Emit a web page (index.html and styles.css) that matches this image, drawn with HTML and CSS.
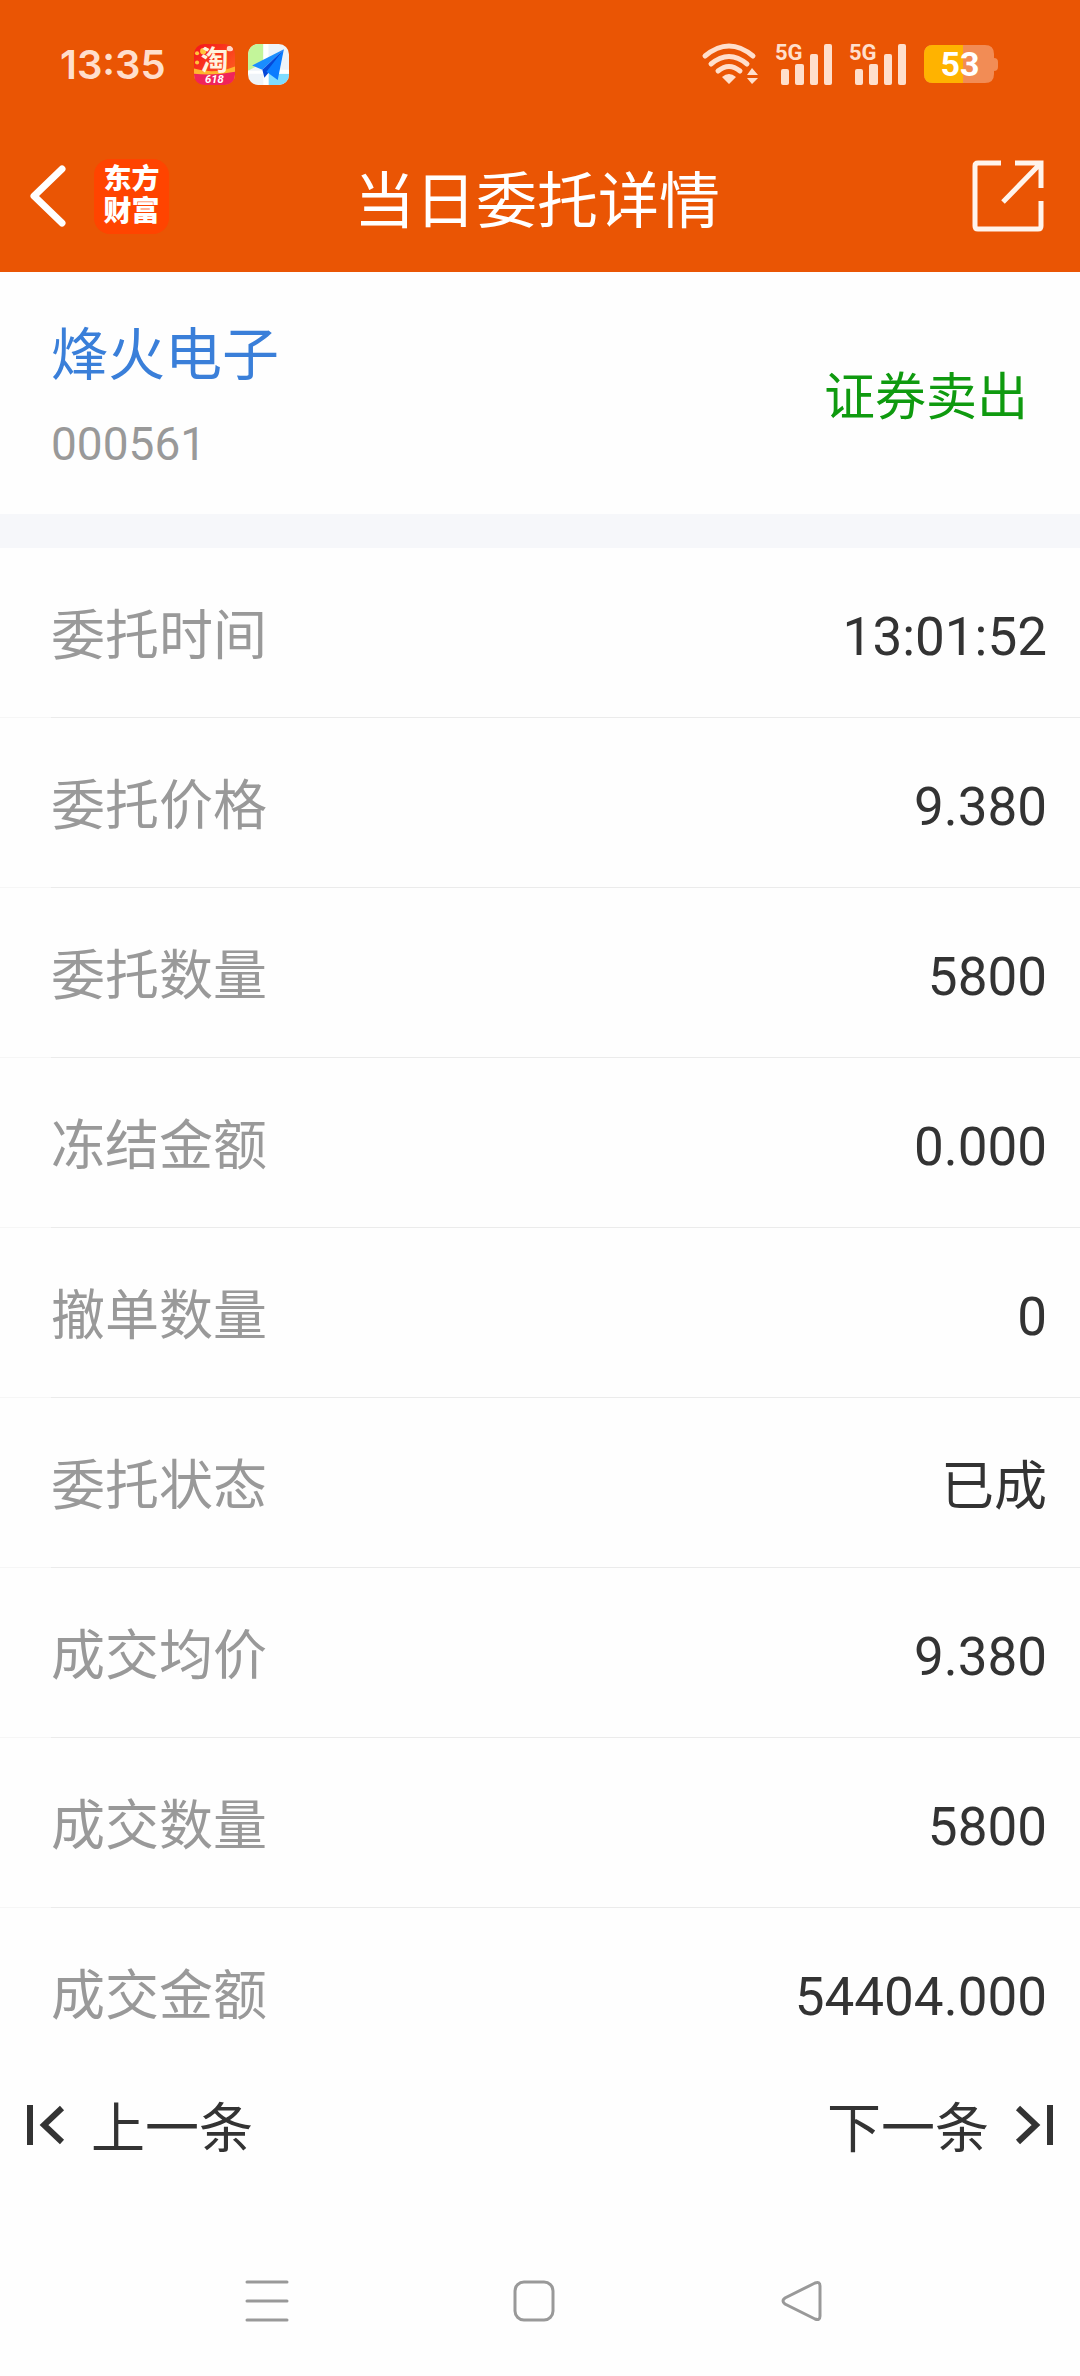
FILE: index.html
```html
<!DOCTYPE html>
<html lang="zh-CN">
<head>
    <meta charset="UTF-8">
    <meta name="viewport" content="width=device-width, initial-scale=1.0">
    <title>当日委托详情</title>
    <link rel="stylesheet" href="styles.css">
</head>
<body>
    <div class="top">
        <div class="status-bar">
            <span class="clock">13:35</span>
            <svg class="app-icon" viewBox="0 0 40 40">
                <defs>
                    <linearGradient id="taoBg" x1="0" y1="0" x2="1" y2="1">
                        <stop offset="0" stop-color="#f5121c"/>
                        <stop offset="1" stop-color="#ff6a1f"/>
                    </linearGradient>
                    <clipPath id="iconClip"><rect width="40" height="40" rx="10"/></clipPath>
                </defs>
                <g clip-path="url(#iconClip)">
                    <rect width="40" height="40" fill="url(#taoBg)"/>
                    <path d="M0 24Q20 30 40 22V34H0Z" fill="#ffb52e"/>
                    <path d="M0 29Q20 31 40 27V40H0Z" fill="#f0245a"/>
                    <circle cx="3" cy="9" r="2" fill="#ffc53a"/>
                    <circle cx="9" cy="7" r="3" fill="#ffc53a"/>
                    <circle cx="3" cy="18" r="2" fill="#ffc53a"/>
                    <rect x="32" y="2" width="6" height="5" rx="2" fill="#ffd9c8"/>
                    <text x="20" y="25" class="tao-text">淘</text>
                    <text x="20" y="38" class="tao-sale">618</text>
                </g>
            </svg>
            <svg class="app-icon" viewBox="0 0 40 40">
                <g clip-path="url(#iconClip)">
                    <rect width="40" height="40" fill="#eef3f8"/>
                    <path d="M0 0H15V18L0 26Z" fill="#c3f59a"/>
                    <path d="M20 29H40V40H20Z" fill="#7fdcff"/>
                    <path d="M15 0H20V40H15ZM0 26H15V29H0ZM20 25H40V29H20Z" fill="#fff"/>
                    <path d="M35 5L4 21L14 25Z" fill="#1a8dff"/>
                    <path d="M35 5L14 25L16 33L20 28Z" fill="#0548d8"/>
                    <path d="M35 5L18 27L29 35Z" fill="#0a7cff"/>
                </g>
            </svg>
            <div class="status-right">
                <svg class="wifi" viewBox="0 0 58 42">
                    <g fill="none" stroke="#ffdfcc" stroke-width="5" stroke-linecap="round">
                        <path d="M4 13Q28 -7 52 13"/>
                        <path d="M10 21Q28 6 46 21"/>
                        <path d="M17 28Q28 19 39 28"/>
                    </g>
                    <path d="M21 34Q28 28 35 34L28 41ZM46 32L51 25L57 32ZM46 35H57L51 41Z" fill="#ffdfcc"/>
                </svg>
                <svg class="signal" viewBox="0 0 58 42">
                    <text x="0" y="17" class="net">5G</text>
                    <g fill="#ffdfcc">
                        <rect x="6" y="26" width="8" height="16" rx="2"/>
                        <rect x="20" y="21" width="9" height="21" rx="2"/>
                        <rect x="35" y="11" width="8" height="31" rx="2"/>
                        <rect x="49" y="1" width="8" height="41" rx="2"/>
                    </g>
                </svg>
                <svg class="signal" viewBox="0 0 58 42">
                    <text x="0" y="17" class="net">5G</text>
                    <g fill="#ffdfcc">
                        <rect x="6" y="26" width="8" height="16" rx="2"/>
                        <rect x="20" y="21" width="9" height="21" rx="2"/>
                        <rect x="35" y="11" width="8" height="31" rx="2"/>
                        <rect x="49" y="1" width="8" height="41" rx="2"/>
                    </g>
                </svg>
                <svg class="battery" viewBox="0 0 75 40">
                    <path d="M10 1H62Q71 1 71 10V14Q75 14 75 18V23Q75 27 71 27V30Q71 39 62 39H10Q1 39 1 30V10Q1 1 10 1Z" fill="#f28c55"/>
                    <path d="M10 1H40V39H10Q1 39 1 30V10Q1 1 10 1Z" fill="#ffb300"/>
                    <text x="37" y="32" class="battery-text">53</text>
                </svg>
            </div>
        </div>
        <header class="title-bar">
            <div class="title-left">
                <button type="button" class="icon-btn" aria-label="返回">
                    <svg width="36" height="62" viewBox="0 0 36 62">
                        <path d="M32 4L4 31L32 58" fill="none" stroke="#fff" stroke-width="7" stroke-linecap="round" stroke-linejoin="round"/>
                    </svg>
                </button>
                <div class="logo"><span>东方</span><span>财富</span></div>
            </div>
            <h1>当日委托详情</h1>
            <button type="button" class="icon-btn share" aria-label="分享">
                <svg width="72" height="72" viewBox="0 0 72 72">
                    <g fill="none" stroke="#fff4ec" stroke-width="5">
                        <path d="M29 3H6Q3 3 3 6V66Q3 69 6 69H66Q69 69 69 66V41"/>
                        <path d="M43 3H69V28M68 4L31 42"/>
                    </g>
                </svg>
            </button>
        </header>
    </div>

    <main>
        <section class="stock">
            <div>
                <a href="#" class="stock-name">烽火电子</a>
                <div class="stock-code">000561</div>
            </div>
            <div class="direction">证券卖出</div>
        </section>

        <dl class="detail">
            <div class="row"><dt>委托时间</dt><dd>13:01:52</dd></div>
            <div class="row"><dt>委托价格</dt><dd>9.380</dd></div>
            <div class="row"><dt>委托数量</dt><dd>5800</dd></div>
            <div class="row"><dt>冻结金额</dt><dd>0.000</dd></div>
            <div class="row"><dt>撤单数量</dt><dd>0</dd></div>
            <div class="row"><dt>委托状态</dt><dd>已成</dd></div>
            <div class="row"><dt>成交均价</dt><dd>9.380</dd></div>
            <div class="row"><dt>成交数量</dt><dd>5800</dd></div>
            <div class="row"><dt>成交金额</dt><dd>54404.000</dd></div>
        </dl>
    </main>

    <div class="pager">
        <button type="button" class="pager-btn">
            <svg width="38" height="40" viewBox="0 0 38 40">
                <path d="M3 0V40M35 3L17 20L35 37" fill="none" stroke="#333" stroke-width="6"/>
            </svg>
            上一条
        </button>
        <button type="button" class="pager-btn">
            下一条
            <svg width="38" height="40" viewBox="0 0 38 40">
                <path d="M35 0V40M3 3L21 20L3 37" fill="none" stroke="#333" stroke-width="6"/>
            </svg>
        </button>
    </div>

    <nav class="system-nav">
        <button type="button" class="icon-btn" aria-label="最近任务">
            <svg width="42" height="42" viewBox="0 0 42 42">
                <path d="M1 2H41M1 21H41M1 40H41" stroke="#999" stroke-width="3" stroke-linecap="round"/>
            </svg>
        </button>
        <button type="button" class="icon-btn" aria-label="主屏幕">
            <svg width="42" height="42" viewBox="0 0 42 42">
                <rect x="2" y="2" width="38" height="38" rx="9" fill="none" stroke="#999" stroke-width="3"/>
            </svg>
        </button>
        <button type="button" class="icon-btn" aria-label="返回上一页">
            <svg width="42" height="42" viewBox="0 0 42 42">
                <path d="M34 3L4 18Q0 21 4 24L34 39Q39 41 39 36V6Q39 1 34 3Z" fill="none" stroke="#999" stroke-width="3"/>
            </svg>
        </button>
    </nav>
</body>
</html>
```

FILE: styles.css
```css
body {
    margin: 0;
    background-color: #fefefe;
    color: #333;
    font-family: Roboto, "Noto Sans CJK SC", sans-serif;
    font-size: 53px;
}
svg {
    display: block;
    flex: none;
    overflow: visible;
}
button {
    padding: 0;
    border: none;
    background: none;
    color: inherit;
    font: inherit;
    cursor: pointer;
}
.top {
    background-color: #ea5504;
    color: #fff;
}
.status-bar {
    display: flex;
    align-items: center;
    height: 112px;
    padding: 8px 82px 0 60px;
}
.clock {
    margin-right: 28px;
    color: #ffdfcc;
    font-family: Inter, sans-serif;
    font-size: 40px;
    font-weight: 600;
}
.app-icon {
    width: 41px;
    height: 41px;
    margin-right: 13px;
}
.tao-text {
    fill: #fff3df;
    font-size: 27px;
    font-weight: bold;
    text-anchor: middle;
}
.tao-sale {
    fill: #fff;
    font-size: 11px;
    font-style: italic;
    font-weight: bold;
    text-anchor: middle;
}
.status-right {
    display: flex;
    align-items: center;
    gap: 16px;
    margin-left: auto;
}
.wifi, .signal {
    width: 58px;
    height: 42px;
}
.net {
    fill: #ffdfcc;
    font-size: 22px;
    font-weight: bold;
}
.battery {
    width: 75px;
    height: 40px;
}
.battery-text {
    fill: #fff;
    font-size: 34px;
    font-weight: bold;
    text-anchor: middle;
}
.title-bar {
    display: grid;
    grid-template-columns: 1fr auto 1fr;
    align-items: center;
    height: 152px;
    padding: 0 36px 0 30px;
}
.title-left {
    display: flex;
    align-items: center;
    gap: 28px;
}
.logo {
    display: flex;
    flex-direction: column;
    justify-content: center;
    width: 75px;
    height: 75px;
    border-radius: 16px;
    background-color: #ff4400;
    font-size: 28px;
    font-weight: 900;
    line-height: 32px;
    text-align: center;
}
.title-bar h1 {
    margin: 0;
    padding-top: 12px;
    font-size: 61px;
    font-weight: normal;
    line-height: 80px;
}
.share {
    justify-self: end;
}
.stock {
    display: flex;
    justify-content: space-between;
    align-items: center;
    padding: 44px 52px 40px 51px;
    border-bottom: 34px solid #f6f7fa;
}
.stock-name {
    display: block;
    margin-bottom: 18px;
    color: #3a7fd9;
    font-size: 57px;
    line-height: 80px;
    text-decoration: none;
}
.stock-code {
    color: #999;
    font-size: 46px;
    line-height: 60px;
}
.direction {
    padding-top: 6px;
    color: #0f9a0f;
    font-size: 51px;
    line-height: 80px;
}
.detail {
    margin: 0;
}
.row {
    display: flex;
    justify-content: space-between;
    align-items: center;
    padding: 49px 33px 41px 51px;
    line-height: 80px;
    /* the divider is fainter under the left inset */
    background: linear-gradient(to right, #f6f6f6 51px, #ebebeb 51px) bottom / 100% 1px no-repeat;
}
.row:last-child {
    background: none;
}
.row dt {
    color: #999;
    font-size: 54px;
}
.row dd {
    margin: 0;
}
.pager {
    display: flex;
    justify-content: space-between;
    padding: 12px 27px 4px;
}
.pager-btn {
    display: flex;
    align-items: center;
    gap: 26px;
    font-size: 54px;
    line-height: 80px;
}
.pager-btn svg {
    margin-bottom: 10px;
}
.system-nav {
    display: flex;
    justify-content: space-evenly;
    padding: 106px 32px 54px 20px;
}
```
